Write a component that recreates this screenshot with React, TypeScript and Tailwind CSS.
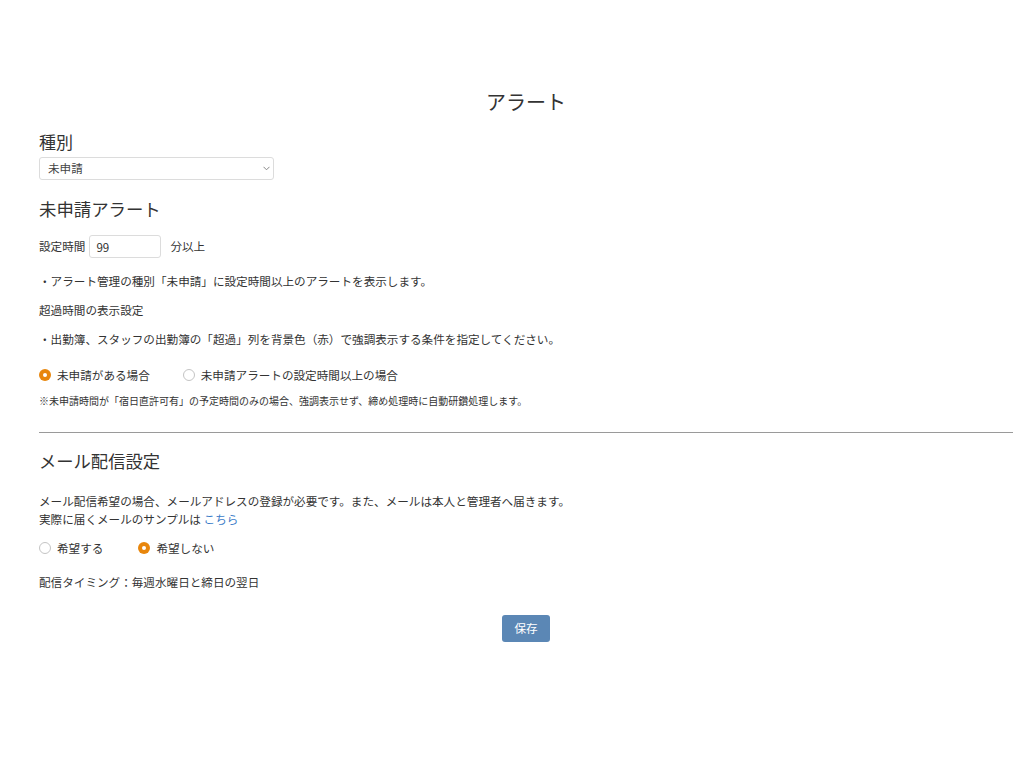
import { useState } from "react";

const font = { fontFamily: '"Noto Sans CJK JP", "Noto Sans", sans-serif' };

function Radio({ checked, label, onClick }: { checked: boolean; label: string; onClick: () => void }) {
  return (
    <label className="flex items-center gap-[6px] cursor-pointer" onClick={onClick}>
      {checked ? (
        <span className="flex h-[12px] w-[12px] items-center justify-center rounded-full bg-[#e8860c]">
          <span className="h-[4px] w-[4px] rounded-full bg-white" />
        </span>
      ) : (
        <span className="h-[12px] w-[12px] rounded-full border border-[#c4c4c4] bg-white" />
      )}
      <span>{label}</span>
    </label>
  );
}

export default function App() {
  const [highlight, setHighlight] = useState("any");
  const [mail, setMail] = useState("no");

  return (
    <div className="min-h-[768px] bg-white text-[#333] text-[11.6px]" style={font}>
      <div className="pl-[39px] pr-[11px] pt-[89px]">
        <h1 className="text-center text-[20px] leading-[26px]">アラート</h1>

        <h2 className="mt-[17px] text-[17px] leading-[20px]">種別</h2>
        <div className="relative mt-[5px] w-[235px]">
          <select className="h-[23px] w-full appearance-none rounded-[3px] border border-[#dcdcdc] bg-white pl-[8px] text-[11.6px] text-[#444] outline-none">
            <option>未申請</option>
          </select>
          <svg className="pointer-events-none absolute right-[4px] top-[9px]" width="7" height="5" viewBox="0 0 7 5">
            <path d="M0.5 0.8 L3.5 3.8 L6.5 0.8" fill="none" stroke="#888" strokeWidth="1" />
          </svg>
        </div>

        <h2 className="mt-[18px] text-[17.4px] leading-[22px]">未申請アラート</h2>

        <div className="mt-[15px] flex items-center">
          <span>設定時間</span>
          <input
            defaultValue="99"
            className="ml-[4px] h-[23px] w-[72px] rounded-[3px] border border-[#dcdcdc] px-[6px] text-[11.6px] outline-none"
          />
          <span className="ml-[9px]">分以上</span>
        </div>

        <p className="mt-[14px] leading-[18px]">・アラート管理の種別「未申請」に設定時間以上のアラートを表示します。</p>
        <p className="mt-[11px] leading-[18px]">超過時間の表示設定</p>
        <p className="mt-[11px] leading-[18px]">・出勤簿、スタッフの出勤簿の「超過」列を背景色（赤）で強調表示する条件を指定してください。</p>

        <div className="mt-[18px] flex items-center gap-[33px] leading-[18px]">
          <Radio checked={highlight === "any"} label="未申請がある場合" onClick={() => setHighlight("any")} />
          <Radio checked={highlight === "over"} label="未申請アラートの設定時間以上の場合" onClick={() => setHighlight("over")} />
        </div>

        <p className="mt-[10px] text-[10px] leading-[14px]">
          ※未申請時間が「宿日直許可有」の予定時間のみの場合、強調表示せず、締め処理時に自動研鑽処理します。
        </p>

        <hr className="mt-[24px] border-t border-[#9a9a9a]" />

        <h2 className="mt-[17px] text-[17.3px] leading-[22px]">メール配信設定</h2>

        <p className="mt-[20px] leading-[18px]">
          メール配信希望の場合、メールアドレスの登録が必要です。また、メールは本人と管理者へ届きます。
        </p>
        <p className="leading-[18px]">
          実際に届くメールのサンプルは <a className="text-[#3a7bc8]">こちら</a>
        </p>

        <div className="mt-[11px] flex items-center gap-[35px] leading-[18px]">
          <Radio checked={mail === "yes"} label="希望する" onClick={() => setMail("yes")} />
          <Radio checked={mail === "no"} label="希望しない" onClick={() => setMail("no")} />
        </div>

        <p className="mt-[16px] leading-[18px]">配信タイミング：毎週水曜日と締日の翌日</p>

        <div className="mt-[24px] flex justify-center">
          <button className="h-[27px] w-[48px] rounded-[3px] bg-[#5b87b5] text-[11.6px] text-white">保存</button>
        </div>
      </div>
    </div>
  );
}
